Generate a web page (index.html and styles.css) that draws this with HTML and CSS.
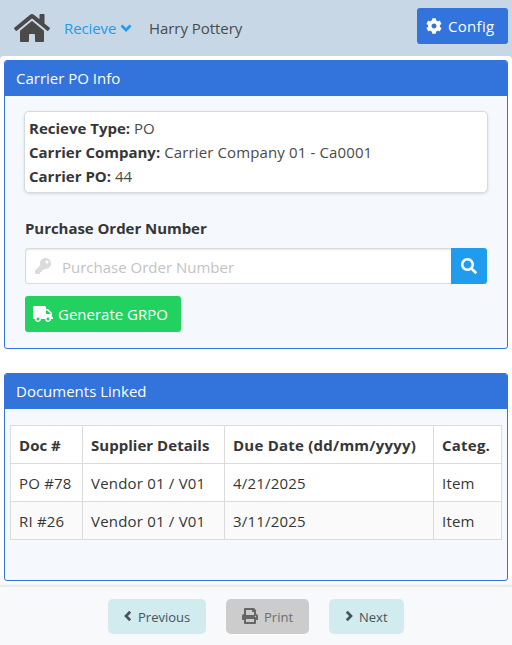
FILE: index.html
```html
<!DOCTYPE html>
<html lang="en">
<head>
<meta charset="utf-8">
<title>Carrier PO</title>
<link rel="stylesheet" href="styles.css">
</head>
<body>
<header class="topbar">
  <svg class="home" viewBox="0 0 576 512"><path d="M280.37 148.26L96 300.11V464a16 16 0 0 0 16 16l112.06-.29a16 16 0 0 0 15.92-16V368a16 16 0 0 1 16-16h64a16 16 0 0 1 16 16v95.64a16 16 0 0 0 16 16.05L464 480a16 16 0 0 0 16-16V300L295.67 148.26a12.19 12.19 0 0 0-15.3 0zM571.6 251.47L488 182.56V44.05a12 12 0 0 0-12-12h-56a12 12 0 0 0-12 12v72.61L318.47 43a48 48 0 0 0-61 0L4.34 251.47a12 12 0 0 0-1.6 16.9l25.5 31A12 12 0 0 0 45.15 301l235.22-193.74a12.19 12.19 0 0 1 15.3 0L530.9 301a12 12 0 0 0 16.9-1.6l25.5-31a12 12 0 0 0-1.7-16.93z"/></svg>
  <a class="menu"><span class="menu-label">Recieve</span><svg class="caret" viewBox="0 0 12 10"><path d="M1.500 2.500L6 7L10.500 2.500"/></svg></a>
  <span class="user">Harry Pottery</span>
  <button class="btn config"><svg viewBox="0 0 512 512"><path d="M487.4 315.7l-42.6-24.6c4.300-23.200 4.300-47 0-70.200l42.600-24.600c4.900-2.800 7.100-8.600 5.500-14-11.100-35.600-30-67.800-54.700-94.600-3.800-4.100-10-5.100-14.800-2.300L380.800 110c-17.900-15.400-38.500-27.300-60.800-35.100V25.800c0-5.600-3.900-10.500-9.400-11.700-36.700-8.200-74.300-7.800-109.200 0-5.500 1.200-9.400 6.100-9.400 11.700V75c-22.200 7.900-42.800 19.800-60.800 35.100L88.700 85.500c-4.900-2.800-11-1.900-14.800 2.300-24.700 26.700-43.600 58.900-54.700 94.600-1.700 5.400.6 11.200 5.500 14L67.300 221c-4.300 23.200-4.300 47 0 70.200l-42.600 24.600c-4.900 2.800-7.100 8.600-5.500 14 11.100 35.600 30 67.800 54.700 94.600 3.800 4.100 10 5.100 14.800 2.300l42.600-24.600c17.900 15.400 38.500 27.300 60.800 35.100v49.200c0 5.600 3.900 10.500 9.400 11.700 36.700 8.200 74.300 7.800 109.200 0 5.500-1.200 9.400-6.100 9.400-11.700v-49.200c22.200-7.900 42.800-19.800 60.800-35.100l42.600 24.600c4.900 2.800 11 1.900 14.800-2.300 24.700-26.700 43.600-58.900 54.700-94.600 1.500-5.500-.7-11.300-5.600-14.100zM256 336c-44.100 0-80-35.900-80-80s35.900-80 80-80 80 35.900 80 80-35.900 80-80 80z"/></svg><span>Config</span></button>
</header>
<main class="content">
  <section class="panel carrier">
    <h2 class="panel-title">Carrier PO Info</h2>
    <div class="panel-body">
      <div class="info">
        <p><b>Recieve Type:</b><span>PO</span></p>
        <p><b>Carrier Company:</b><span class="company">Carrier Company 01 - Ca0001</span></p>
        <p><b>Carrier PO:</b><span>44</span></p>
      </div>
      <label class="label">Purchase Order Number</label>
      <div class="search">
        <div class="field"><svg viewBox="0 0 512 512"><path d="M512 176.001C512 273.203 433.202 352 336 352c-11.220 0-22.190-1.062-32.827-3.069l-24.012 27.014A23.999 23.999 0 0 1 261.223 384H224v40c0 13.255-10.745 24-24 24h-40v40c0 13.255-10.745 24-24 24H24c-13.255 0-24-10.745-24-24v-78.059c0-6.365 2.529-12.470 7.029-16.971l161.802-161.802C163.108 213.814 160 195.271 160 176 160 78.798 238.797.001 335.999 0 433.488-.001 512 78.511 512 176.001zM336 128c0 26.510 21.490 48 48 48s48-21.490 48-48-21.490-48-48-48-48 21.490-48 48z"/></svg><span>Purchase Order Number</span></div>
        <button class="go"><svg viewBox="0 0 512 512"><path d="M505 442.700L405.300 343c-4.500-4.500-10.600-7-17-7H372c27.600-35.300 44-79.700 44-128C416 93.100 322.900 0 208 0S0 93.100 0 208s93.100 208 208 208c48.300 0 92.700-16.400 128-44v16.300c0 6.400 2.500 12.500 7 17l99.700 99.700c9.400 9.400 24.600 9.400 33.900 0l28.300-28.300c9.400-9.400 9.400-24.600.1-34zM208 336c-70.700 0-128-57.200-128-128 0-70.700 57.200-128 128-128 70.700 0 128 57.200 128 128 0 70.700-57.200 128-128 128z"/></svg></button>
      </div>
      <button class="btn generate"><svg viewBox="0 0 640 512"><path d="M624 352h-16V243.900c0-12.700-5.100-24.900-14.100-33.900L494 110.100c-9-9-21.200-14.100-33.900-14.100H416V48c0-26.500-21.500-48-48-48H48C21.500 0 0 21.500 0 48v320c0 26.500 21.500 48 48 48h16c0 53 43 96 96 96s96-43 96-96h128c0 53 43 96 96 96s96-43 96-96h48c8.800 0 16-7.200 16-16v-32c0-8.800-7.200-16-16-16zM160 464c-26.500 0-48-21.500-48-48s21.500-48 48-48 48 21.500 48 48-21.500 48-48 48zm320 0c-26.500 0-48-21.500-48-48s21.500-48 48-48 48 21.500 48 48-21.500 48-48 48zm80-208H416V144h44.100l99.900 99.900V256z"/></svg><span>Generate GRPO</span></button>
    </div>
  </section>
  <section class="panel docs">
    <h2 class="panel-title">Documents Linked</h2>
    <div class="docs-body">
      <table>
        <colgroup><col class="c1"><col class="c2"><col class="c3"><col class="c4"></colgroup>
        <thead><tr><th>Doc #</th><th>Supplier Details</th><th class="due">Due Date (dd/mm/yyyy)</th><th class="due">Categ.</th></tr></thead>
        <tbody>
          <tr><td>PO #78</td><td>Vendor 01 / V01</td><td>4/21/2025</td><td>Item</td></tr>
          <tr><td>RI #26</td><td>Vendor 01 / V01</td><td>3/11/2025</td><td>Item</td></tr>
        </tbody>
      </table>
    </div>
  </section>
</main>
<footer class="actions">
  <button class="act prev"><svg class="chev" viewBox="0 0 8 12"><path d="M6.200 1.800L2 6L6.200 10.200"/></svg><span>Previous</span></button>
  <button class="act print"><svg class="printer" viewBox="0 0 512 512"><path d="M448 192V77.250c0-8.490-3.370-16.620-9.370-22.630L393.370 9.370c-6-6-14.140-9.370-22.630-9.370H96C78.330 0 64 14.330 64 32v160c-35.350 0-64 28.650-64 64v112c0 8.840 7.160 16 16 16h48v96c0 17.670 14.330 32 32 32h320c17.670 0 32-14.330 32-32v-96h48c8.840 0 16-7.160 16-16V256c0-35.350-28.650-64-64-64zm-64 256H128v-96h256v96zm0-224H128V64h192v48c0 8.840 7.160 16 16 16h48v96zm48 72c-13.250 0-24-10.750-24-24 0-13.260 10.750-24 24-24s24 10.740 24 24c0 13.250-10.750 24-24 24z"/></svg><span>Print</span></button>
  <button class="act next"><svg class="chev" viewBox="0 0 8 12"><path d="M1.800 1.800L6 6L1.800 10.200"/></svg><span>Next</span></button>
</footer>
</body>
</html>
```
FILE: styles.css
```css
* { box-sizing: border-box; }
body { margin: 0; height: 645px; display: flex; flex-direction: column; overflow: hidden; background: #c8d7e6; color: #363636; font: 15px/24px "Open Sans", "Noto Sans", sans-serif; }
svg { fill: currentColor; display: block; flex: none; }
h2, p { margin: 0; font-weight: 400; font-size: 15px; }
button { border: 0; padding: 0; font: inherit; color: inherit; display: flex; align-items: center; white-space: nowrap; }

.topbar { height: 56px; flex: none; display: flex; align-items: center; padding: 0 4px 0 14px; color: #4a4a4a; }
.home { width: 36px; height: 32px; }
.menu { display: flex; align-items: center; gap: 3px; width: 71px; margin-left: 14px; color: #209cee; }
.menu-label { width: 53px; letter-spacing: -.1px; }
.caret { width: 12px; height: 10px; }
.caret, .chev { fill: none; stroke: currentColor; stroke-width: 2.7; }
.user { margin-left: 14px; letter-spacing: -.05px; }
.btn { height: 36px; color: #fff; border-radius: 3px; }
.config { width: 91px; margin: -4px 0 0 auto; padding-left: 9px; gap: 6px; background: #3273dc; letter-spacing: .3px; }
.config svg { width: 16px; height: 16px; }

.content { flex: none; height: 529px; padding: 4px; background: #fff; border-radius: 4px 4px 0 0; }
.panel { border: 1px solid #3273dc; border-radius: 3px; background: #f5f9fe; overflow: hidden; }
.carrier { height: 289px; }
.docs { height: 208px; margin-top: 24px; }
.panel-title { height: 35px; padding: 5px 11px; background: #3273dc; color: #fff; }
.panel-body { padding: 15px 20px 0; }
.info { height: 82px; width: 464px; margin-left: -1px; padding: 4px; background: #fff; border: 1px solid #d5dae0; border-radius: 5px; box-shadow: 0 1px 3px rgba(0,0,0,.12); }
.info p { display: flex; gap: 4px; color: #4a4a4a; }
.company { letter-spacing: .13px; }
b, .label, th { font-weight: 700; color: #363636; }
.label { display: block; height: 32px; margin-top: 23px; letter-spacing: -.05px; }
.search { display: flex; width: 462px; height: 36px; }
.field { flex: 1; display: flex; align-items: center; gap: 11px; padding: 1px 0 0 9px; background: #fff; border: 1px solid #dbdbdb; border-right: 0; border-radius: 3px 0 0 3px; box-shadow: inset 0 1px 2px rgba(10,10,10,.1); color: #c3c3c3; }
.field svg { width: 16px; height: 16px; color: #dbdbdb; margin-top: -2px; }
.go { width: 36px; justify-content: center; background: #209cee; border-radius: 0 3px 3px 0; color: #fff; }
.go svg { width: 16px; height: 16px; }
.generate { width: 156px; margin-top: 12px; padding-left: 8px; gap: 5px; background: #23d160; }
.generate svg { width: 20px; height: 16px; }

.docs-body { padding: 16px 5px; }
table { table-layout: fixed; width: 492px; border-collapse: collapse; background: #fff; }
.c1 { width: 72px; } .c2 { width: 142px; } .c3 { width: 209px; } .c4 { width: 68px; }
th, td { height: 38px; padding: 0 0 0 8px; border: 1px solid #dbdbdb; text-align: left; white-space: nowrap; line-height: 24px; letter-spacing: .2px; }
th { letter-spacing: .03px; }
.due { letter-spacing: .23px; }
tbody tr:nth-child(2) { background: #fafafa; }

.actions { flex: 1; display: flex; justify-content: center; gap: 20px; padding-top: 12px; background: #f8f9fa; border-top: 2px solid #e9ebec; box-shadow: 0 0 3px rgba(0,0,0,.12); z-index: 1; color: #46545c; }
.act { height: 35px; border-radius: 5px; background: #d1ebef; font-size: 13px; }
.prev { width: 98px; padding-left: 16px; gap: 6px; }
.print { width: 83px; padding-left: 16px; gap: 6px; background: #ccc; color: #6e6e6e; }
.next { width: 75px; padding-left: 16px; gap: 6px; }
.chev { width: 8px; height: 12px; margin-top: -2px; }
.printer { width: 16px; height: 16px; color: #666; margin-top: -1px; }
```
